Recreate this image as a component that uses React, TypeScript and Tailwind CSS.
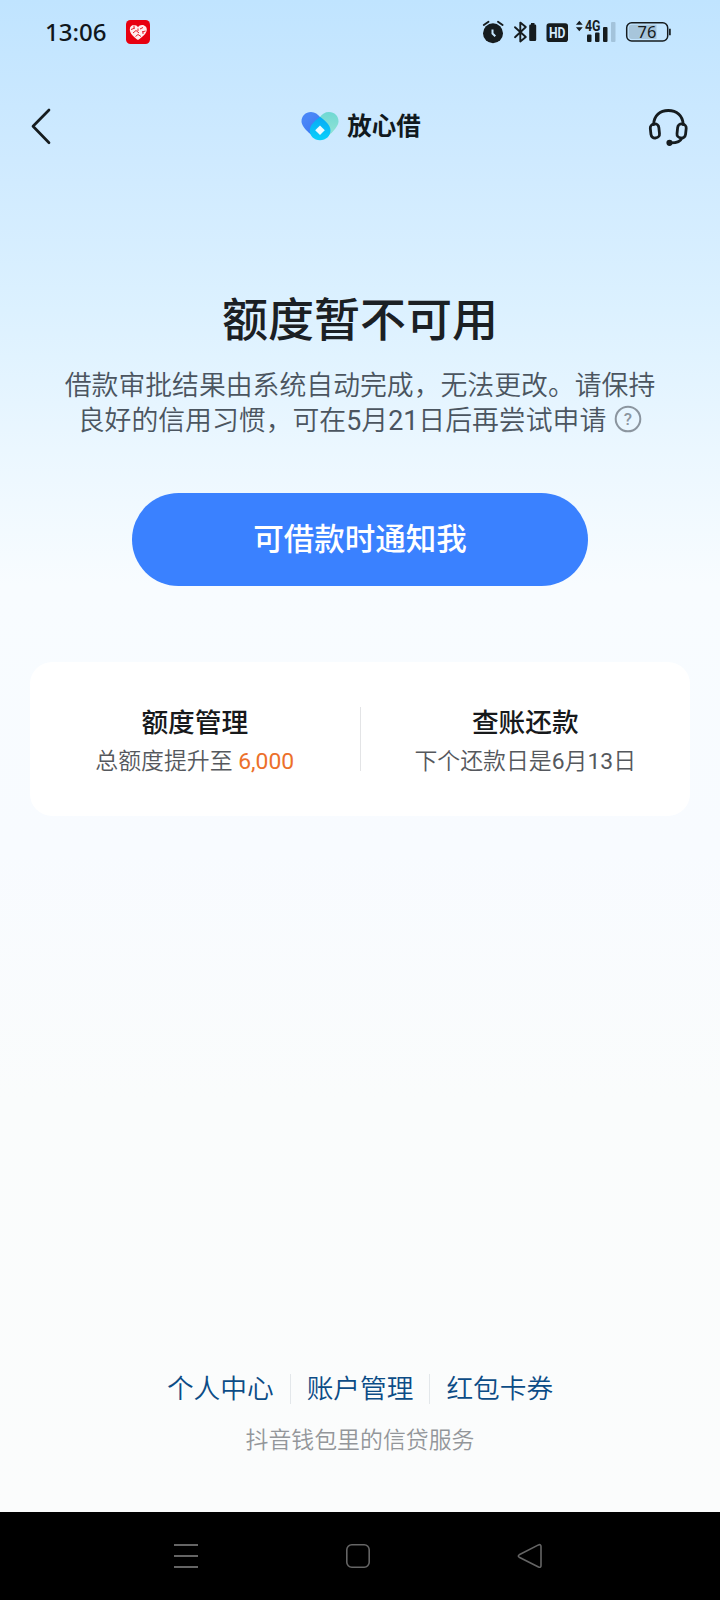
import type { ReactNode } from 'react';

const INK = '#161c1f';

function StatusBar() {
  return (
    <header className="flex h-16 items-center pl-[45px] pr-[46px]">
      <span className="font-['Noto_Sans'] text-[24px] font-medium leading-none text-[#10171c]">13:06</span>
      <svg className="ml-5" width="24" height="24" viewBox="0 0 24 24">
        <rect width="24" height="24" rx="4.500" fill="#e8000f" />
        <path d="M12 20C8 17.200 3.800 13.500 3.800 9.400C3.800 6.800 5.600 5 8 5C9.700 5 11.200 5.900 12 7.300C12.800 5.900 14.300 5 16 5C18.400 5 20.800 6.800 20.800 9.400C20.800 13.500 16 17.200 12 20Z" fill="#ffeeee" />
        <path d="M5 9.500L9 8M7 13L10 10.500L13 13M9.500 16.500L12 14.500L15 16.500M14 9L17 7.500M16 12L19.500 11M8 5.500V8M17 14V11M12 8.500V11" stroke="#e8202c" strokeWidth="1" fill="none" />
      </svg>
      <div className="ml-auto flex items-center">
        <svg width="194" height="26" viewBox="480 19 194 26" fill="none">
          <circle cx="493" cy="33.200" r="10" fill={INK} />
          <path d="M483.800 25L488.500 21.700M502.600 25L498 21.700" stroke={INK} strokeWidth="1.900" strokeLinecap="round" />
          <path d="M492.500 29.500V33.500L495.300 36.300" stroke="#c6e6ff" strokeWidth="2" />
          <path d="M515 27.200L525.800 37L520.300 41.500V22.600L525.800 27L515 37.200" stroke={INK} strokeWidth="1.900" strokeLinejoin="round" strokeLinecap="round" />
          <path d="M531 23H534.500V24.600H535A1.200 1.200 0 0 1 536.200 25.800V39.500A1.400 1.400 0 0 1 534.800 41H530.600A1.400 1.400 0 0 1 529.200 39.500V25.800A1.200 1.200 0 0 1 530.400 24.600H531Z" fill={INK} />
          <rect x="546.500" y="23.300" width="21.500" height="18.700" rx="2.800" fill={INK} />
          <text x="557.200" y="38" textAnchor="middle" fontFamily="Roboto" fontWeight="700" fontSize="14.500" textLength="16.500" lengthAdjust="spacingAndGlyphs" fill="#d3ebff">HD</text>
          <path d="M579.300 20.800L582.700 24.800H575.900ZM579.300 31.200L575.900 27.200H582.700Z" fill={INK} />
          <text x="585" y="31.300" fontFamily="Roboto" fontWeight="700" fontSize="14" textLength="15.500" lengthAdjust="spacingAndGlyphs" fill={INK}>4G</text>
          <rect x="587" y="34.500" width="4.500" height="7.500" rx="1" fill={INK} />
          <rect x="595" y="32.500" width="4.500" height="9.500" rx="1" fill={INK} />
          <rect x="603" y="27" width="4.500" height="15" rx="1" fill={INK} />
          <rect x="611" y="22" width="4.500" height="20" rx="1" fill="#a3c3db" />
          <rect x="626.700" y="22.700" width="41" height="18.300" rx="5" stroke={INK} strokeWidth="1.500" />
          <path d="M632 24.800H656.500V39H632A3.300 3.300 0 0 1 628.700 35.700V28.100A3.300 3.300 0 0 1 632 24.800Z" fill="#a7c5db" />
          <path d="M669.900 28.800V35.200" stroke={INK} strokeWidth="1.700" />
          <text x="647" y="37.800" textAnchor="middle" fontFamily="Noto Sans" fontSize="16.500" fill={INK}>76</text>
        </svg>
      </div>
    </header>
  );
}

function NavBar() {
  return (
    <nav className="flex h-[124px] items-center justify-between px-[30px]">
      <svg width="42" height="42" viewBox="30 105 42 42" fill="none">
        <path d="M49 110L33 126.300L49 142.700" stroke={INK} strokeWidth="2.700" strokeLinecap="round" strokeLinejoin="round" />
      </svg>
      <div className="ml-[2px] flex items-center gap-[8px]">
        <svg width="38" height="30" viewBox="301 111 38 30">
          <defs>
            <linearGradient id="left" x1="0" y1="0" x2="1" y2="1">
              <stop offset="0.200" stopColor="#4a86f7" />
              <stop offset="1" stopColor="#2f68ea" />
            </linearGradient>
            <linearGradient id="right" x1="0" y1="0" x2="0" y2="1">
              <stop offset="0" stopColor="#6fd8d3" />
              <stop offset="1" stopColor="#9ae5d5" />
            </linearGradient>
            <linearGradient id="front" x1="0" y1="0" x2="0" y2="1">
              <stop offset="0" stopColor="#08a9f5" />
              <stop offset="1" stopColor="#09d1fb" />
            </linearGradient>
          </defs>
          <path d="M311 112C315 112 318 114.500 320 117L334.500 118L332 132L320 139.500C315 139 301.500 128 301.500 121.500C301.500 116 305.500 112 311 112Z" fill="url(#left)" />
          <path d="M320 117C322 114 325 112 329 112C334.500 112 338.500 116 338.500 121.500C338.500 128 326 139.500 320 139.500Z" fill="url(#right)" />
          <path d="M320 116.800C323 119.200 330.500 124.500 330.500 130.500C330.500 136 326 140.200 320 140.200C314 140.200 309.800 136 309.800 130.500C309.800 124.500 317 119.200 320 116.800Z" fill="url(#front)" />
          <path d="M320 125.500L324.800 130.300L320 135L315.200 130.300Z" fill="#eafaff" />
        </svg>
        <span className="pt-[2px] text-[24.500px] font-bold leading-none text-[#11191e]">放心借</span>
      </div>
      <svg width="42" height="42" viewBox="648 105 42 42" fill="none" stroke={INK} strokeWidth="2.800" strokeLinecap="round">
        <path d="M653.600 124.500C654 115.500 660 110.500 668.300 110.500C676.600 110.500 682.800 115.500 683.200 124.500" />
        <rect x="650.600" y="124" width="8.600" height="14" rx="4" transform="rotate(-6 654.900 131)" />
        <rect x="677.300" y="124" width="8.600" height="14" rx="4" transform="rotate(6 681.600 131)" />
        <path d="M681.500 138.500C680.500 141.500 676 142.800 671 142.800" />
        <circle cx="669.500" cy="142.800" r="2.200" fill={INK} strokeWidth="1.800" />
      </svg>
    </nav>
  );
}

function Num({ children }: { children: ReactNode }) {
  return <span className="font-normal">{children}</span>;
}

function CardItem({ title, children }: { title: string; children: ReactNode }) {
  return (
    <div className="flex flex-1 flex-col items-center pt-[5px]">
      <h2 className="text-[26.700px] font-medium leading-[40px] text-[#17191b]">{title}</h2>
      <p className="text-[22.900px] font-[350] leading-[38px] text-[#55585d]">{children}</p>
    </div>
  );
}

function FooterLinks() {
  return (
    <div className="flex h-8 items-center justify-center text-[26.700px] font-[350] leading-none text-[#0c4c86]">
      <a className="pr-4">个人中心</a>
      <a className="border-l border-[#e3e7ea] px-4 py-0.5">账户管理</a>
      <a className="border-l border-[#e3e7ea] py-0.5 pl-4">红包卡券</a>
    </div>
  );
}

function SystemNav() {
  return (
    <div className="flex h-[88px] items-center justify-between bg-black pl-[172px] pr-[176px]">
      <svg width="28" height="28" viewBox="0 0 28 28" stroke="#656565" strokeWidth="2">
        <path d="M2 3H26M2 14H26M2 25H26" />
      </svg>
      <svg width="28" height="28" viewBox="0 0 28 28" fill="none" stroke="#656565" strokeWidth="1.600">
        <rect x="2.800" y="2.800" width="22.400" height="22.400" rx="5" />
      </svg>
      <svg width="28" height="28" viewBox="0 0 28 28" fill="none" stroke="#656565" strokeWidth="1.600" strokeLinejoin="round">
        <path d="M3.200 12.800L22.500 2.900Q25 2 25 4.500V23.500Q25 26 22.500 25L3.200 15.200Q1.500 14 3.200 12.800Z" />
      </svg>
    </div>
  );
}

export default function App() {
  return (
    <div className="flex h-[1600px] w-[720px] flex-col bg-[linear-gradient(180deg,#c0e4ff_0px,#cfeaff_160px,#dcf1ff_310px,#ebf7ff_450px,#f8fcff_585px,#f8fbff_850px,#fafcfc_1100px,#fbfcfc_1512px)] font-[Roboto,'Noto_Sans_CJK_SC',sans-serif]">
      <StatusBar />
      <NavBar />
      <main className="flex flex-1 flex-col">
        <section className="flex flex-col items-center pt-[102px]">
          <h1 className="text-[46px] font-medium leading-[60px] text-[#1b2024]">额度暂不可用</h1>
          <p className="mt-[19px] whitespace-nowrap text-center text-[26.850px] font-[350] leading-[35px] text-[#4b5560]">
            借款审批结果由系统自动完成，无法更改。请保持
            <br />
            <span className="inline-flex items-center">
              <span>
                良好的信用习惯，可在<Num>5</Num>月<Num>21</Num>日后再尝试申请
              </span>
              <svg className="mb-[6px] ml-2" width="28" height="28" viewBox="0 0 28 28" fill="none">
                <circle cx="14" cy="14" r="12.300" stroke="#8b959f" strokeWidth="2" />
                <text x="14" y="20" textAnchor="middle" fontFamily="Roboto" fontSize="17" fontWeight="500" fill="#8b959f">?</text>
              </svg>
            </span>
          </p>
          <button className="mt-[54px] h-[93px] w-[456px] rounded-full bg-[#3a81ff] text-[30.500px] font-medium text-white">
            可借款时通知我
          </button>
        </section>
        <section className="mx-[30px] mt-[76px] flex h-[154px] items-center rounded-[22px] bg-white">
          <CardItem title="额度管理">
            总额度提升至 <span className="font-normal text-[#ec702a]">6,000</span>
          </CardItem>
          <div className="h-16 w-px bg-[#e3e4e6]" />
          <CardItem title="查账还款">
            下个还款日是<Num>6</Num>月<Num>13</Num>日
          </CardItem>
        </section>
        <footer className="mt-auto flex flex-col items-center pb-[52px]">
          <FooterLinks />
          <p className="mt-[17px] text-[22.900px] font-[350] leading-[38px] text-[#93969a]">抖音钱包里的信贷服务</p>
        </footer>
      </main>
      <SystemNav />
    </div>
  );
}
